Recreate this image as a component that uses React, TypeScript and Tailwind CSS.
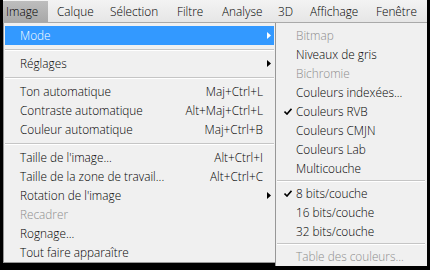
import React from "react";

type Item =
  | { sep: true }
  | { label: string; shortcut?: string; arrow?: boolean; disabled?: boolean; active?: boolean; checked?: boolean; sep?: false };

const leftItems: Item[] = [
  { label: "Mode", arrow: true, active: true },
  { sep: true },
  { label: "Réglages", arrow: true },
  { sep: true },
  { label: "Ton automatique", shortcut: "Maj+Ctrl+L" },
  { label: "Contraste automatique", shortcut: "Alt+Maj+Ctrl+L" },
  { label: "Couleur automatique", shortcut: "Maj+Ctrl+B" },
  { sep: true },
  { label: "Taille de l'image...", shortcut: "Alt+Ctrl+I" },
  { label: "Taille de la zone de travail...", shortcut: "Alt+Ctrl+C" },
  { label: "Rotation de l'image", arrow: true },
  { label: "Recadrer", disabled: true },
  { label: "Rognage..." },
  { label: "Tout faire apparaître" },
];

const rightItems: Item[] = [
  { label: "Bitmap", disabled: true },
  { label: "Niveaux de gris" },
  { label: "Bichromie", disabled: true },
  { label: "Couleurs indexées..." },
  { label: "Couleurs RVB", checked: true },
  { label: "Couleurs CMJN" },
  { label: "Couleurs Lab" },
  { label: "Multicouche" },
  { sep: true },
  { label: "8 bits/couche", checked: true },
  { label: "16 bits/couche" },
  { label: "32 bits/couche" },
  { sep: true },
  { label: "Table des couleurs...", disabled: true },
];

const menus = [
  { label: "Image", w: "w-[45px]", pl: "pl-[3px]", active: true },
  { label: "Calque", w: "w-[53px]", pl: "pl-[9px]" },
  { label: "Sélection", w: "w-[67px]", pl: "pl-[9px]" },
  { label: "Filtre", w: "w-[45px]", pl: "pl-[9px]" },
  { label: "Analyse", w: "w-[56px]", pl: "pl-[9px]" },
  { label: "3D", w: "w-[32px]", pl: "pl-[9px]" },
  { label: "Affichage", w: "w-[66px]", pl: "pl-[9px]" },
  { label: "Fenêtre", w: "w-[60px]", pl: "pl-[9px]" },
];

function Arrow({ white }: { white?: boolean }) {
  return (
    <svg width="4" height="7" viewBox="0 0 4 7" className="block">
      <path d="M0 0 L4 3.5 L0 7 Z" fill={white ? "#ffffff" : "#000000"} />
    </svg>
  );
}

function Check() {
  return (
    <svg width="8" height="7" viewBox="0 0 8 7" className="block">
      <path d="M0.5 3.5 L3 6 L7.5 0.8" stroke="#000" strokeWidth="1.6" fill="none" />
    </svg>
  );
}

function Sep() {
  return (
    <div className="h-[9px] flex items-center">
      <div className="w-full h-[2px] border-t border-[#c5c5c5] border-b border-b-white" />
    </div>
  );
}

export default function App() {
  return (
    <div className="w-[430px] h-[270px] bg-black overflow-hidden font-['Open_Sans',sans-serif] font-[350] text-[11.8px] leading-none text-black">
      <div className="ml-[3px] w-[424px] h-[266px] flex flex-col overflow-hidden">
        <div className="h-[23px] shrink-0 flex bg-gradient-to-b from-[#f3f3f3] to-[#e6e6e6] border-b border-[#a9a9a9]">
          {menus.map((m) => (
            <div
              key={m.label}
              className={`${m.w} ${m.pl} h-[21px] mt-[1px] flex items-center ${
                m.active ? "bg-gradient-to-b from-[#bdbdbd] to-[#a8a8a8]" : ""
              }`}
            >
              {m.label}
            </div>
          ))}
        </div>
        <div className="flex flex-1 min-h-0">
          <div className="w-[272px] h-[240px] bg-[#f0f0f0] border-l border-b border-[#979797] pt-[3px] px-[1px] flex flex-col">
            {leftItems.map((it, i) =>
              it.sep ? (
                <Sep key={i} />
              ) : (
                <div
                  key={i}
                  className={`h-[19px] flex items-center pl-[15px] ${
                    it.active ? "bg-[#3399ff] text-white" : it.disabled ? "text-[#8d8d8d]" : ""
                  }`}
                >
                  <span className="flex-1 whitespace-nowrap">{it.label}</span>
                  {it.shortcut && <span className="whitespace-nowrap">{it.shortcut}</span>}
                  <span className="w-[11px] pl-[4px] flex items-center">{it.arrow && <Arrow white={it.active} />}</span>
                </div>
              )
            )}
          </div>
          <div className="w-[152px] bg-[#f0f0f0] border-l border-[#979797] pt-[3px] pl-[1px] pr-[2px] flex flex-col overflow-hidden">
            {rightItems.map((it, i) =>
              it.sep ? (
                <Sep key={i} />
              ) : (
                <div
                  key={i}
                  className={`h-[19px] shrink-0 flex items-center pl-[19px] relative whitespace-nowrap ${
                    it.disabled ? "text-[#8d8d8d]" : ""
                  }`}
                >
                  {it.checked && (
                    <span className="absolute left-[7px] top-[6px]">
                      <Check />
                    </span>
                  )}
                  {it.label}
                </div>
              )
            )}
          </div>
        </div>
      </div>
    </div>
  );
}
